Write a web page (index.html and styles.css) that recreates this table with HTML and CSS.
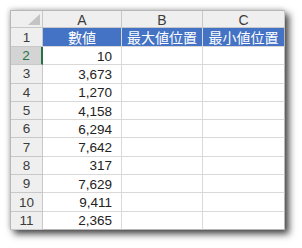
FILE: index.html
```html
<!DOCTYPE html>
<html>
<head>
<meta charset="utf-8">
<link rel="stylesheet" href="styles.css">
</head>
<body>
<div class="sheet">
  <div class="hd corner"><span class="tri"></span></div>
  <div class="hd col">A</div>
  <div class="hd col">B</div>
  <div class="hd col last">C</div>

  <div class="hd row">1</div>
  <div class="cell title">數値</div>
  <div class="cell title">最大値位置</div>
  <div class="cell title last">最小値位置</div>

  <div class="hd row sel">2</div>
  <div class="cell num">10</div>
  <div class="cell"></div>
  <div class="cell last"></div>

  <div class="hd row">3</div>
  <div class="cell num">3,673</div>
  <div class="cell"></div>
  <div class="cell last"></div>

  <div class="hd row">4</div>
  <div class="cell num">1,270</div>
  <div class="cell"></div>
  <div class="cell last"></div>

  <div class="hd row">5</div>
  <div class="cell num">4,158</div>
  <div class="cell"></div>
  <div class="cell last"></div>

  <div class="hd row">6</div>
  <div class="cell num">6,294</div>
  <div class="cell"></div>
  <div class="cell last"></div>

  <div class="hd row">7</div>
  <div class="cell num">7,642</div>
  <div class="cell"></div>
  <div class="cell last"></div>

  <div class="hd row">8</div>
  <div class="cell num">317</div>
  <div class="cell"></div>
  <div class="cell last"></div>

  <div class="hd row">9</div>
  <div class="cell num">7,629</div>
  <div class="cell"></div>
  <div class="cell last"></div>

  <div class="hd row">10</div>
  <div class="cell num">9,411</div>
  <div class="cell"></div>
  <div class="cell last"></div>

  <div class="hd row">11</div>
  <div class="cell num">2,365</div>
  <div class="cell"></div>
  <div class="cell last"></div>
</div>
</body>
</html>
```
FILE: styles.css
```css
html, body {
  margin: 0;
  padding: 0;
  background: #ffffff;
}
body {
  width: 302px;
  height: 248px;
  overflow: hidden;
}
.sheet {
  margin: 10px 0 0 10px;
  width: 275px;
  box-sizing: border-box;
  border-top: 1px solid #b8b8b8;
  border-left: 1px solid #b8b8b8;
  display: grid;
  grid-template-columns: 32px 79px 81px 82px;
  grid-template-rows: 17px 19px repeat(10, 18.3px);
  background: #ffffff;
  box-shadow: 4px 4px 7px rgba(0, 0, 0, 0.72), -1px -1px 5px rgba(0, 0, 0, 0.18);
  font-family: "Liberation Sans", Arial, sans-serif;
  font-size: 13.5px;
  color: #222;
}
.sheet > div {
  box-sizing: border-box;
  border-right: 1px solid #d9d9d9;
  border-bottom: 1px solid #d9d9d9;
  display: flex;
  align-items: center;
  overflow: hidden;
  white-space: nowrap;
}
.hd {
  background: #efefef;
  color: #3c3c3c;
  justify-content: center;
  border-right-color: #c8c8c8 !important;
  border-bottom-color: #c8c8c8 !important;
}
.hd.col {
  font-size: 14px;
  padding-top: 1px;
}
.hd.corner {
  position: relative;
}
.tri {
  position: absolute;
  right: 2px;
  bottom: 2px;
  width: 0;
  height: 0;
  border-left: 12px solid transparent;
  border-bottom: 11px solid #c4c4c4;
}
.hd.row {
  font-size: 13.5px;
}
.hd.sel {
  background: #d4d4d4;
  color: #217346;
  border-right: 2px solid #217346 !important;
}
.cell.title {
  background: #4472c4;
  color: #ffffff;
  justify-content: center;
  font-family: "Noto Sans CJK JP", "Noto Sans CJK SC", sans-serif;
  font-size: 14px;
  border-right-color: #d9d9d9;
  border-bottom-color: #d9d9d9;
}
.cell.num {
  justify-content: flex-end;
  padding-right: 9px;
  padding-top: 1px;
}
.cell.last {
  border-right-color: #b8b8b8 !important;
}
.sheet > div:nth-last-child(-n+4) {
  border-bottom-color: #b8b8b8;
}
```
